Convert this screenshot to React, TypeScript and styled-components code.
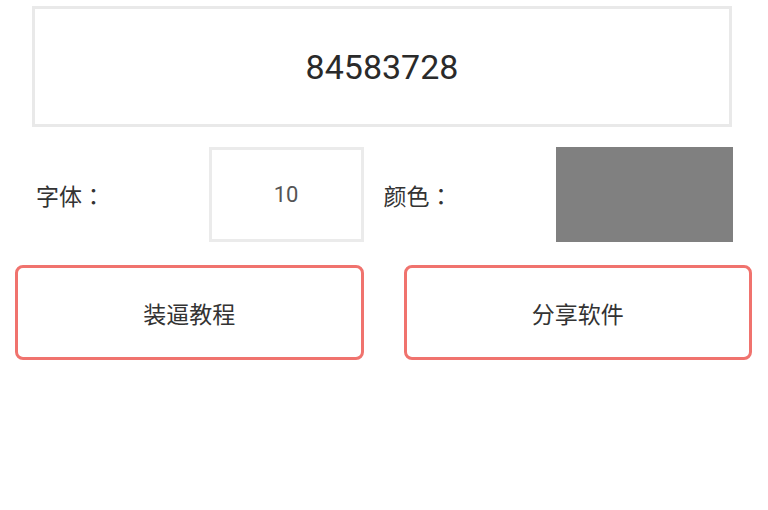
import React, { useState } from 'react';
import styled, { createGlobalStyle } from 'styled-components';

const GlobalStyle = createGlobalStyle`
  html, body {
    margin: 0;
    padding: 0;
    background: #ffffff;
  }
  body {
    font-family: Roboto, "Noto Sans CJK SC", sans-serif;
    color: #333333;
  }
`;

const App: React.FC = () => {
  const [code] = useState('84583728');
  const [fontSize] = useState(10);
  const [color] = useState('#808080');

  return (
    <>
      <GlobalStyle />
      <Page>
        <CodeBox>{code}</CodeBox>
        <SettingsRow>
          <Label>字体：</Label>
          <SizeBox>{fontSize}</SizeBox>
          <Label $gap>颜色：</Label>
          <ColorSwatch $color={color} />
        </SettingsRow>
        <ButtonRow>
          <OutlineButton>装逼教程</OutlineButton>
          <OutlineButton>分享软件</OutlineButton>
        </ButtonRow>
      </Page>
    </>
  );
};

const Page = styled.div`
  display: flex;
  flex-direction: column;
  padding-top: 6px;
  width: 768px;
  height: 510px;
  box-sizing: border-box;
`;

const CodeBox = styled.div`
  margin: 0 36px 0 32px;
  height: 121px;
  box-sizing: border-box;
  border: 3px solid #e9e9e9;
  display: flex;
  align-items: center;
  justify-content: center;
  font-family: Roboto, sans-serif;
  font-size: 34px;
  color: #2a2a2a;
`;

const SettingsRow = styled.div`
  display: flex;
  align-items: center;
  margin-top: 20px;
  padding: 0 35px 0 36px;
  height: 95px;
`;

const Label = styled.div<{ $gap?: boolean }>`
  flex: 1;
  margin-left: ${p => (p.$gap ? '20px' : '0')};
  font-family: "Noto Sans CJK TC", "Noto Sans CJK SC", sans-serif;
  font-size: 23px;
  color: #333333;
`;

const SizeBox = styled.div`
  width: 155px;
  height: 95px;
  box-sizing: border-box;
  border: 3px solid #ebebeb;
  display: flex;
  align-items: center;
  justify-content: center;
  font-family: Roboto, sans-serif;
  font-size: 22px;
  color: #555555;
`;

const ColorSwatch = styled.div<{ $color: string }>`
  width: 177px;
  height: 95px;
  background: ${p => p.$color};
`;

const ButtonRow = styled.div`
  display: flex;
  gap: 40px;
  margin-top: 23px;
  padding: 0 16px 0 15px;
`;

const OutlineButton = styled.button`
  flex: 1;
  height: 95px;
  box-sizing: border-box;
  border: 3px solid #f0736e;
  border-radius: 8px;
  background: #ffffff;
  font-family: "Noto Sans CJK SC", sans-serif;
  font-size: 23px;
  color: #333333;
  cursor: pointer;
`;

export default App;
